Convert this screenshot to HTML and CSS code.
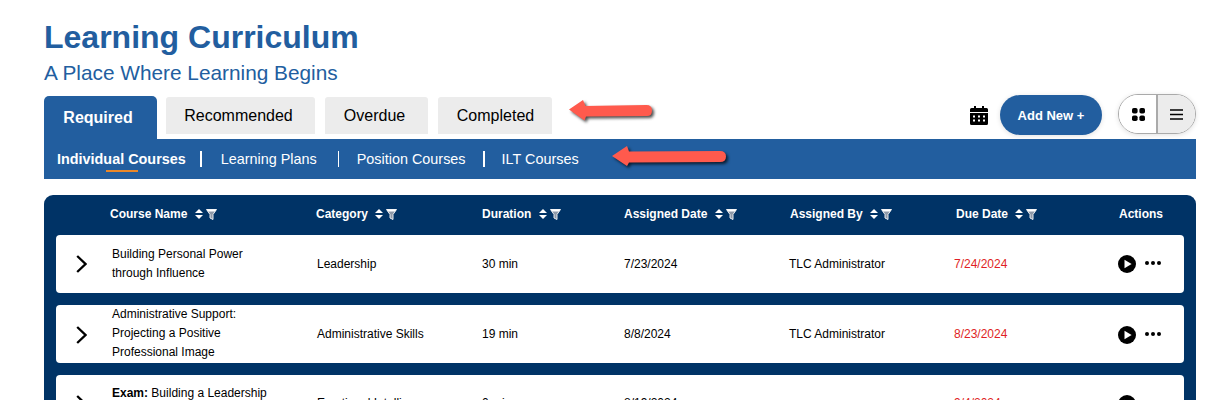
FILE: index.html
```html
<!DOCTYPE html>
<html lang="en">
<head>
<meta charset="utf-8">
<title>Learning Curriculum</title>
<link rel="stylesheet" href="styles.css">
</head>
<body>
<svg class="defs" width="0" height="0" aria-hidden="true">
  <symbol id="sort" viewBox="0 0 8 10"><path d="M4 0 8 4H0zM4 10 0 6h8z" fill="#fff"/></symbol>
  <symbol id="filter" viewBox="0 0 11 11"><path d="M.5.500h10L7 5.500V10.500L4 9V5.500z" fill="#8e99a8" stroke="#e8ebef"/><path d="M.6.500h9.800L9 2.500H2z" fill="#fff"/></symbol>
  <symbol id="chev" viewBox="0 0 11 18"><path d="M1.200 1 9.500 9l-8.300 8" fill="none" stroke="#000" stroke-width="2.300"/></symbol>
  <symbol id="play" viewBox="0 0 18 18"><circle cx="9" cy="9" r="9"/><path d="M6.500 4.800v8.400L13.600 9z" fill="#fff"/></symbol>
  <symbol id="more" viewBox="0 0 16 4"><circle cx="2" cy="2" r="2"/><circle cx="8" cy="2" r="2"/><circle cx="14" cy="2" r="2"/></symbol>
</svg>
<main class="page">
  <h1 class="title">Learning Curriculum</h1>
  <p class="subtitle">A Place Where Learning Begins</p>

  <div class="tabbar">
    <nav class="tabs">
      <a class="tab tab-active">Required</a>
      <a class="tab tab-rec">Recommended</a>
      <a class="tab tab-over">Overdue</a>
      <a class="tab tab-comp">Completed</a>
      <svg class="arrow arrow-a" viewBox="0 0 84 21"><path d="M0 9.500 14 0l2.500 6 61-1q5.500 0 5.500 5.500T78 16l-61 .5-1.500 4z" fill="#ff5a4d"/></svg>
    </nav>
    <div class="tools">
      <svg class="cal" viewBox="0 0 18 20"><path d="M1.500 3H4V1h2v2h6V1h2v2h2.500A1.500 1.500 0 0 1 18 4.500V7H0V4.500A1.500 1.500 0 0 1 1.500 3zM0 8h18v10.500a1.500 1.500 0 0 1-1.500 1.500h-15A1.500 1.500 0 0 1 0 18.500zm3 2.500v2h2v-2zm5 0v2h2v-2zm5 0v2h2v-2zm-10 4v2h2v-2zm5 0v2h2v-2zm5 0v2h2v-2z" fill-rule="evenodd"/></svg>
      <a class="add">Add New +</a>
      <div class="toggle">
        <span class="tg tg-grid"><svg width="13" height="13" viewBox="0 0 13 13"><rect width="5.600" height="5.600" rx="1.800"/><rect x="7.400" width="5.600" height="5.600" rx="1.800"/><rect y="7.400" width="5.600" height="5.600" rx="1.800"/><rect x="7.400" y="7.400" width="5.600" height="5.600" rx="1.800"/></svg></span>
        <span class="tg tg-list"><svg width="13" height="11" viewBox="0 0 13 11"><path d="M0 1h13M0 5.500h13M0 10h13" stroke="#000" stroke-width="1.500"/></svg></span>
      </div>
    </div>
  </div>

  <nav class="subnav">
    <a class="sub sub-active">Individual Courses</a>
    <a class="sub sub-plans">Learning Plans</a>
    <a class="sub sub-pos">Position Courses</a>
    <a class="sub sub-ilt">ILT Courses</a>
    <svg class="arrow arrow-b" viewBox="0 0 114 20"><path d="M0 10 15 0l2 5.500 91-.5q6 0 6 5.500t-6 5.500l-91 .5-2 3.500z" fill="#ff5a4d"/></svg>
  </nav>

  <section class="table">
    <div class="grid head">
      <div></div>
      <div class="th">Course Name <span class="icons"><svg class="s"><use href="#sort"/></svg><svg class="f"><use href="#filter"/></svg></span></div>
      <div class="th">Category <span class="icons"><svg class="s"><use href="#sort"/></svg><svg class="f"><use href="#filter"/></svg></span></div>
      <div class="th">Duration <span class="icons"><svg class="s"><use href="#sort"/></svg><svg class="f"><use href="#filter"/></svg></span></div>
      <div class="th">Assigned Date <span class="icons"><svg class="s"><use href="#sort"/></svg><svg class="f"><use href="#filter"/></svg></span></div>
      <div class="th">Assigned By <span class="icons"><svg class="s"><use href="#sort"/></svg><svg class="f"><use href="#filter"/></svg></span></div>
      <div class="th">Due Date <span class="icons"><svg class="s"><use href="#sort"/></svg><svg class="f"><use href="#filter"/></svg></span></div>
      <div class="th th-act">Actions</div>
    </div>

    <div class="grid row">
      <svg class="chev"><use href="#chev"/></svg>
      <div class="name">Building Personal Power<br>through Influence</div>
      <div class="cat">Leadership</div>
      <div>30 min</div>
      <div>7/23/2024</div>
      <div class="by">TLC Administrator</div>
      <div class="due">7/24/2024</div>
      <div class="act"><svg class="play"><use href="#play"/></svg><svg class="more"><use href="#more"/></svg></div>
    </div>

    <div class="grid row lift">
      <svg class="chev"><use href="#chev"/></svg>
      <div class="name">Administrative Support:<br>Projecting a Positive<br>Professional Image</div>
      <div class="cat">Administrative Skills</div>
      <div>19 min</div>
      <div>8/8/2024</div>
      <div class="by">TLC Administrator</div>
      <div class="due">8/23/2024</div>
      <div class="act"><svg class="play"><use href="#play"/></svg><svg class="more"><use href="#more"/></svg></div>
    </div>

    <div class="grid row lift">
      <svg class="chev"><use href="#chev"/></svg>
      <div class="name"><b>Exam:</b> Building a Leadership<br>Mindset</div>
      <div class="cat">Emotional Intelligence</div>
      <div>0 min</div>
      <div>8/19/2024</div>
      <div class="by"></div>
      <div class="due">9/4/2024</div>
      <div class="act"><svg class="play"><use href="#play"/></svg><svg class="more"><use href="#more"/></svg></div>
    </div>
  </section>
</main>
</body>
</html>
```
FILE: styles.css
```css
* { box-sizing: border-box; }
html, body { margin: 0; height: 400px; overflow: hidden; background: #fff; }
body { font-family: "Liberation Sans", Arial, sans-serif; color: #000; }
.defs { position: absolute; }
.page { padding: 19px 17px 0 44px; }
.title { margin: 0; font-size: 32px; line-height: 37px; font-weight: 700; color: #225e9f; }
.subtitle { margin: 5px 0 0; font-size: 20.8px; line-height: 23px; color: #225e9f; }

.tabbar { display: flex; justify-content: space-between; margin-top: 12px; height: 43px; }
.tabs { display: flex; position: relative; align-items: flex-start; height: 43px; }
.tab { display: flex; align-items: center; justify-content: center; height: 37px; margin-top: 1px; padding-top: 1px; background: #ececec; border-radius: 3px 3px 0 0; font-size: 16px; }
.tab-active { width: 113px; height: 43px; margin: 0 9px 0 0; padding: 0 5px 0 0; background: #225e9f; color: #fff; font-weight: 700; border-radius: 5px 5px 0 0; }
.tab-rec { width: 149px; margin-right: 10px; padding-right: 4px; }
.tab-over { width: 103px; margin-right: 10px; padding-right: 4px; }
.tab-comp { width: 114px; padding-left: 1px; }
.arrow { position: absolute; overflow: visible; filter: drop-shadow(2px 2px 1.500px rgba(0, 0, 0, .7)); }
.arrow-a { left: 525px; top: 4px; width: 84px; height: 21px; }

.tools { display: flex; align-items: flex-start; height: 40px; margin-top: -2px; }
.cal { width: 18px; height: 20px; margin: 11px 12px 0 0; }
.add { display: flex; align-items: center; justify-content: center; width: 102px; height: 40px; margin-top: 1px; border-radius: 20px; background: #225e9f; color: #fff; font-size: 13px; font-weight: 700; box-shadow: 0 1px 5px rgba(0, 0, 0, .12); }
.toggle { display: flex; width: 78px; height: 40px; margin-left: 16px; border: 1px solid #aaa; border-radius: 20px; overflow: hidden; box-shadow: 0 1px 5px rgba(0, 0, 0, .12); }
.tg { display: flex; align-items: center; justify-content: center; flex: 1; }
.tg-grid { background: #fff; border-right: 2px solid #aaa; flex: 0 0 39px; padding-left: 2px; }
.tg-list { background: #ececec; }

.subnav { position: relative; display: flex; align-items: center; height: 40px; padding-left: 13px; background: #225e9f; color: #fff; font-size: 14.4px; }
.sub { position: relative; display: flex; align-items: center; height: 16px; border-right: 1px solid #fff; }
.sub-active { font-weight: 700; padding-right: 14px; margin-right: 19px; border-right-width: 2px; }
.sub-active::after { content: ""; position: absolute; left: 49px; bottom: -5px; width: 32px; height: 2px; background: #e8872a; }
.sub-plans { padding-right: 21px; margin-right: 18px; }
.sub-pos { padding-right: 17px; margin-right: 17px; border-right-width: 2px; }
.sub-ilt { border: 0; }
.arrow-b { left: 568px; top: 7px; width: 114px; height: 20px; }

.table { margin-top: 16px; padding: 0 12px; background: #003366; border-radius: 9px 9px 0 0; height: 300px; }
.grid { display: grid; grid-template-columns: 54px 206px 166px 142px 166px 166px 133px 1fr; align-items: center; }
.head { height: 40px; padding-bottom: 2px; color: #fff; font-size: 12px; font-weight: 700; }
.th { display: flex; align-items: center; white-space: pre; }
.icons { display: inline-flex; align-items: center; margin-left: 4px; }
.th-act { padding-left: 30px; }
.s { width: 8px; height: 10px; margin-right: 3px; }
.f { width: 11px; height: 11px; }
.row { background: #fff; border-radius: 4px; font-size: 12px; height: 58px; margin-bottom: 12px; }
.lift > div:not(.act) { margin-bottom: 2px; }
.chev { width: 11px; height: 18px; margin-left: 20px; }
.name { line-height: 19px; padding-left: 2px; }
.cat { padding-left: 1px; }
.by { margin-left: -1px; }
.due { margin-left: -2px; color: #e01f26; }
.act { display: flex; align-items: center; padding-left: 29px; }
.play { width: 18px; height: 18px; flex: none; }
.more { width: 16px; height: 4px; flex: none; margin: -2px 0 0 9px; }
```
